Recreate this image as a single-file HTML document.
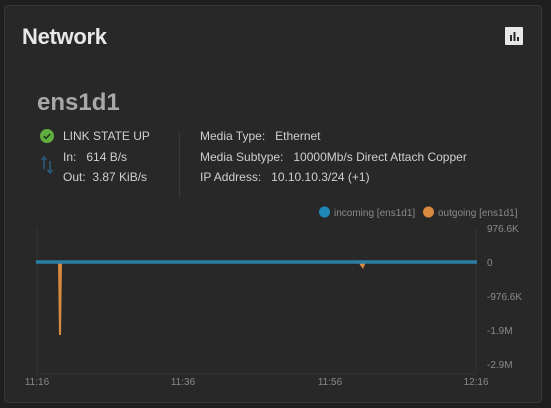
<!DOCTYPE html>
<html><head><style>
body{margin:0;width:551px;height:408px;background:#1f1f1f;font-family:"Liberation Sans",sans-serif;overflow:hidden;position:relative}
.card{position:absolute;left:4px;top:5px;width:538px;height:398px;background:#282828;border:1px solid #363636;border-radius:4px;box-sizing:border-box}
.t{position:absolute;white-space:nowrap}
.s{font-size:12px;color:#cfcfcf}
</style></head><body>
<div class="card"></div>
<div class="t" style="left:22px;top:24px;font-size:22px;font-weight:bold;color:#e8e8e8;letter-spacing:-0.3px">Network</div>
<svg class="t" style="left:505px;top:27px" width="18" height="18"><rect width="18" height="18" rx="1" fill="#e8e8e8"/><rect x="5" y="8" width="2" height="6" fill="#282828"/><rect x="8.5" y="5" width="2" height="9" fill="#282828"/><rect x="12" y="10" width="2" height="4" fill="#282828"/></svg>
<div class="t" style="left:37px;top:89px;font-size:24px;font-weight:bold;color:#a8a8a8">ens1d1</div>
<svg class="t" style="left:40px;top:129px" width="14" height="14"><circle cx="7" cy="7" r="7" fill="#5fae3e"/><path d="M3.8 7.2l2.2 2.2 4.2-4.4" stroke="#1e3a12" stroke-width="1.6" fill="none"/></svg>
<svg class="t" style="left:40px;top:155px" width="14" height="30"><path d="M4 2v12M1.5 5L4 2l2.5 3M10 6v12M7.5 15l2.5 3 2.5-3" stroke="#2a5a7a" stroke-width="1.6" fill="none"/></svg>
<div class="t s" style="left:63px;top:129px">LINK STATE UP</div>
<div class="t s" style="left:63px;top:150px">In:&nbsp;&nbsp; 614 B/s</div>
<div class="t s" style="left:63px;top:170px">Out:&nbsp; 3.87 KiB/s</div>
<div class="t" style="left:179px;top:132px;width:1px;height:66px;background:#3a3a3a"></div>
<div class="t s" style="left:200px;top:129px">Media Type:&nbsp;&nbsp; Ethernet</div>
<div class="t s" style="left:200px;top:150px">Media Subtype:&nbsp;&nbsp; 10000Mb/s Direct Attach Copper</div>
<div class="t s" style="left:200px;top:170px">IP Address:&nbsp;&nbsp; 10.10.10.3/24 (+1)</div>
<svg class="t" style="left:0;top:200px" width="551" height="208">
<circle cx="324.5" cy="12" r="5.5" fill="#1e88b8"/><circle cx="428.5" cy="12" r="5.5" fill="#d88b3e"/>
<text x="334" y="16" font-size="10" fill="#8a8a8a" font-family="Liberation Sans">incoming [ens1d1]</text>
<text x="438" y="16" font-size="10" fill="#8a8a8a" font-family="Liberation Sans">outgoing [ens1d1]</text>
<line x1="37" y1="28" x2="37" y2="174" stroke="#333"/><line x1="476" y1="28" x2="476" y2="174" stroke="#333"/>
<line x1="37" y1="174" x2="476" y2="174" stroke="#333"/>
<path d="M58 62 L59 135 L61 135 L62 62Z" fill="#d88b3e"/>
<path d="M358 62 L363 69 L366 62Z" fill="#d88b3e"/>
<line x1="36" y1="62" x2="477" y2="62" stroke="#2a7ea6" stroke-width="3.5"/>
<g font-size="10" fill="#8a8a8a" font-family="Liberation Sans">
<text x="487" y="32">976.6K</text><text x="487" y="66">0</text><text x="487" y="100">-976.6K</text><text x="487" y="134">-1.9M</text><text x="487" y="168">-2.9M</text>
<text x="37" y="185" text-anchor="middle">11:16</text><text x="183" y="185" text-anchor="middle">11:36</text><text x="330" y="185" text-anchor="middle">11:56</text><text x="476" y="185" text-anchor="middle">12:16</text>
</g></svg>
</body></html>
